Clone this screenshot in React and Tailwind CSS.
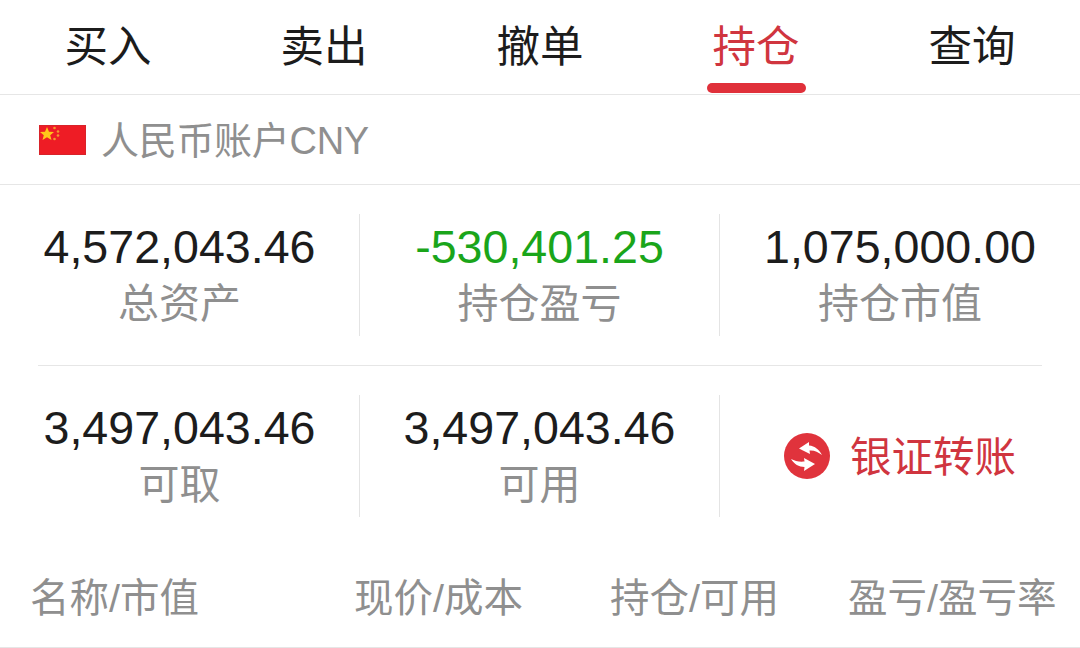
import React from 'react';

const font = { fontFamily: '"Liberation Sans", "Noto Sans CJK SC", sans-serif' };

const tabs = ['买入', '卖出', '撤单', '持仓', '查询'];

const Flag = () => (
  <svg width="47" height="30" viewBox="0 0 47 30" className="shrink-0">
    <rect width="47" height="30" fill="#e3201f" />
    <rect x="0.5" y="0.5" width="46" height="29" fill="#ee1c25" stroke="#d8232a" />
    <polygon points="8,2 10,6.8 15,7 11.2,10.2 12.5,15 8,12.3 3.5,15 4.8,10.2 1,7 6,6.8" fill="#ffc61a" />
    <circle cx="15.5" cy="3" r="1.3" fill="#f29a2e" />
    <circle cx="19" cy="6.5" r="1.3" fill="#f29a2e" />
    <circle cx="19" cy="10.5" r="1.3" fill="#f29a2e" />
    <circle cx="15.5" cy="14" r="1.3" fill="#f29a2e" />
  </svg>
);

const TransferIcon = () => (
  <svg width="46" height="46" viewBox="0 0 46 46" className="shrink-0">
    <circle cx="23" cy="23" r="23" fill="#e0333c" />
    <path d="M25 9 L15 15.5 L26 21 L25.5 17.5 C30 17 34 19 38 22 C35 16.5 31 13 25 12.5 Z" fill="#fff" />
    <path d="M20 25 L31 31 L20 38 L20.5 34 C15 34 10 31 7 26 C11 28 15 29 20.5 28.5 Z" fill="#fff" />
  </svg>
);

const Stat = ({ value, label, valueClass = 'text-[#1c1c1c]', divider = true }) => (
  <div className={`w-[360px] h-[122px] flex flex-col items-center ${divider ? 'border-r border-[#e4e4e4]' : ''}`}>
    <div className={`text-[46.6px] leading-[66px] ${valueClass}`}>{value}</div>
    <div className="text-[41px] leading-[49px] text-[#8f8f8f]">{label}</div>
  </div>
);

export default function App() {
  return (
    <div className="w-[1080px] h-[648px] bg-white overflow-hidden" style={font}>
      <div className="h-[95px] flex border-b border-[#e6e6e6]">
        {tabs.map((t) => (
          <div key={t} className="relative w-[216px] flex justify-center">
            <span className={`text-[43.5px] leading-[95px] ${t === '持仓' ? 'text-[#d0353f]' : 'text-[#1c1c1c]'}`}>{t}</span>
            {t === '持仓' && (
              <div className="absolute top-[83px] left-[59px] w-[99px] h-[10px] rounded-full bg-[#e0303a]" />
            )}
          </div>
        ))}
      </div>

      <div className="h-[90px] flex items-center gap-[15px] pl-[39px] border-b border-[#e6e6e6]">
        <Flag />
        <span className="text-[38px] leading-[46px] pt-[3px] text-[#8f8f8f] tracking-[-0.3px]">人民币账户CNY</span>
      </div>

      <div className="pt-[29px]">
        <div className="flex">
          <Stat value="4,572,043.46" label="总资产" />
          <Stat value="-530,401.25" label="持仓盈亏" valueClass="text-[#1aa51a]" />
          <Stat value="1,075,000.00" label="持仓市值" divider={false} />
        </div>
        <div className="mx-[38px] my-[29px] border-t border-[#e6e6e6]" />
        <div className="flex">
          <Stat value="3,497,043.46" label="可取" />
          <Stat value="3,497,043.46" label="可用" />
          <div className="w-[360px] h-[122px] flex items-center justify-center gap-[20px]">
            <TransferIcon />
            <span className="text-[41.5px] pt-[5px] text-[#d0353f]">银证转账</span>
          </div>
        </div>
      </div>

      <div className="mt-[30px] h-[101px] pt-[3px] flex items-center border-b border-[#e6e6e6] text-[39.5px] text-[#8f8f8f]">
        <span className="w-[324px] pl-[30px]">名称/市值</span>
        <span className="w-[256px] pl-[30px]">现价/成本</span>
        <span className="w-[238px] pl-[30px]">持仓/可用</span>
        <span className="pl-[30px] whitespace-nowrap">盈亏/盈亏率</span>
      </div>
    </div>
  );
}
